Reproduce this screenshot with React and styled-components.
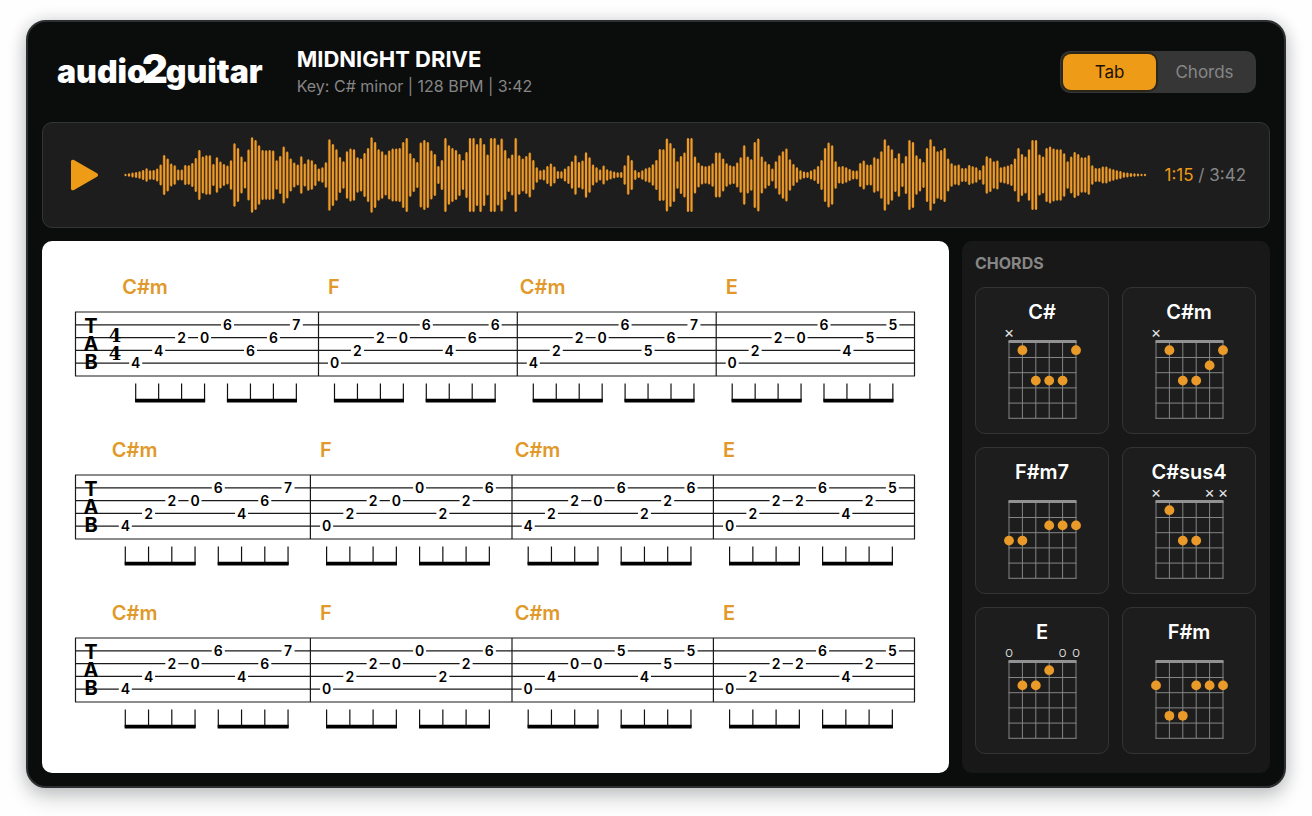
import React, { useState } from 'react';
import styled, { createGlobalStyle, ThemeProvider } from 'styled-components';

const theme = {
  accent: '#ee9b17',
  frame: '#0b0c0c',
  panel: '#1d1d1d',
  sidebar: '#181818',
  line: '#333434',
  muted: '#868686',
  white: '#ffffff',
};

const GlobalStyle = createGlobalStyle`
  *, *::before, *::after {
    box-sizing: border-box;
  }

  body {
    margin: 0;
    background: #fefefe;
    font-family: Inter, 'Liberation Sans', sans-serif;
  }

  h1, h2, h3, p {
    margin: 0;
  }
`;

const Page = styled.div`
  padding: 20px 26px 28px;
`;

const StyledApp = styled.div`
  padding: 0 14px 13px;
  color: ${({ theme }) => theme.white};
  background: ${({ theme }) => theme.frame};
  border: 2px solid #2d3032;
  border-radius: 20px;
  box-shadow: 0 10px 20px rgba(20, 24, 30, 0.2), 0 0 16px rgba(20, 24, 30, 0.16);
`;

const StyledHeader = styled.header`
  display: flex;
  align-items: center;
  height: 100px;
  padding: 0 14px 0 15px;
`;

const Logo = styled.a`
  display: flex;
  align-items: baseline;
  margin-right: 34px;
  padding-bottom: 4px;
  color: inherit;
  font-size: 32px;
  font-weight: 900;
  line-height: 40px;
  text-decoration: none;

  span {
    margin: 0 -2px 0 -5px;
    font-size: 40px;
  }
`;

const Song = styled.div`
  flex: 1;

  h1 {
    font-size: 22px;
    font-weight: 700;
    line-height: 28px;
  }

  p {
    color: ${({ theme }) => theme.muted};
    font-size: 16px;
    line-height: 26px;
  }
`;

const Toggle = styled.div`
  display: grid;
  grid-template-columns: 93px 97px;
  padding: 3px;
  background: #363636;
  border-radius: 10px;
`;

const ToggleButton = styled.button`
  height: 36px;
  padding: 0;
  color: ${({ $active }) => ($active ? '#1c1206' : '#868686')};
  background: ${({ $active, theme }) => ($active ? theme.accent : 'transparent')};
  border: 0;
  border-radius: 8px;
  box-shadow: ${({ $active }) => ($active ? '0 0 0 2px #2c2619' : 'none')};
  font: 400 17px Inter, sans-serif;
  cursor: pointer;
`;

const Player = styled.section`
  display: flex;
  align-items: center;
  height: 106px;
  padding: 0 23px 0 27px;
  background: ${({ theme }) => theme.panel};
  border: 1px solid ${({ theme }) => theme.line};
  border-radius: 10px;
`;

const PlayButton = styled.button`
  display: flex;
  margin-right: 25px;
  padding: 0;
  background: none;
  border: 0;
  cursor: pointer;
`;

const StyledWave = styled.svg`
  flex: 1;
  min-width: 0;
  height: 80px;
  margin-right: 18px;
`;

const Time = styled.p`
  color: ${({ theme }) => theme.muted};
  font-size: 17px;
  white-space: nowrap;

  span {
    color: ${({ theme }) => theme.accent};
  }
`;

const Main = styled.main`
  display: grid;
  grid-template-columns: minmax(0, 1fr) 308px;
  gap: 13px;
  margin-top: 13px;
`;

const Sheet = styled.section`
  display: flex;
  flex-direction: column;
  gap: 27px;
  padding: 30px 34px 40px 33px;
  background: ${({ theme }) => theme.white};
  border-radius: 10px;
`;

const StyledStaff = styled.svg`
  display: block;
  width: 100%;
  overflow: visible;

  text {
    font-family: Inter, 'Liberation Sans', sans-serif;
    font-weight: 600;
  }

  .chord {
    fill: #e0992a;
    font-size: 20px;
  }

  .fret {
    font-size: 14px;
    text-anchor: middle;
  }

  .clef {
    font-size: 20px;
    font-weight: 700;
    text-anchor: middle;
  }

  .meter {
    font-family: 'DejaVu Serif', serif;
    font-size: 18px;
    font-weight: 700;
    text-anchor: middle;
  }
`;

const Sidebar = styled.aside`
  padding: 9px 14px 19px 13px;
  background: ${({ theme }) => theme.sidebar};
  border-radius: 10px;

  h2 {
    margin-bottom: 11px;
    color: ${({ theme }) => theme.muted};
    font-size: 16px;
    font-weight: 700;
    line-height: 26px;
  }
`;

const ChordGrid = styled.div`
  display: grid;
  grid-template-columns: 1fr 1fr;
  gap: 13px;
`;

const Card = styled.article`
  display: flex;
  flex-direction: column;
  align-items: center;
  gap: 3px;
  padding: 12px 0;
  background: ${({ theme }) => theme.panel};
  border: 1px solid ${({ theme }) => theme.line};
  border-radius: 10px;

  h3 {
    font-size: 20px;
    font-weight: 600;
    line-height: 24px;
  }

  svg {
    overflow: visible;
  }

  text {
    fill: #e4e4e4;
    font-family: Inter, sans-serif;
    text-anchor: middle;
  }
`;

// half heights of the waveform bars, in thirds of a pixel
const levels = [
  2, 4, 6, 8, 10, 14, 19, 13, 14, 18, 30, 59, 48, 33, 28, 15, 15, 29, 28, 35, 50, 74, 54, 58, 58,
  32, 52, 39, 32, 27, 43, 94, 80, 54, 39, 75, 112, 104, 88, 74, 73, 74, 72, 43, 56, 84, 69, 48, 36,
  30, 55, 33, 46, 43, 32, 18, 22, 37, 106, 92, 76, 53, 40, 70, 78, 76, 52, 48, 65, 80, 112, 98, 76,
  70, 60, 72, 78, 78, 80, 98, 110, 64, 50, 38, 96, 104, 98, 72, 62, 26, 44, 110, 88, 80, 74, 62, 44,
  68, 110, 110, 92, 110, 92, 60, 110, 110, 90, 108, 74, 50, 60, 110, 58, 48, 56, 66, 44, 22, 13, 15,
  26, 33, 24, 11, 10, 18, 26, 40, 58, 38, 42, 67, 52, 30, 22, 15, 27, 16, 12, 9, 7, 8, 28, 58, 44,
  14, 8, 13, 19, 22, 31, 44, 77, 76, 108, 95, 80, 40, 56, 66, 110, 110, 54, 36, 27, 25, 27, 34, 66,
  66, 48, 34, 28, 26, 36, 52, 88, 54, 46, 98, 108, 54, 40, 32, 18, 40, 58, 70, 78, 46, 32, 22, 13,
  9, 8, 12, 17, 26, 44, 80, 96, 88, 40, 24, 26, 22, 17, 12, 12, 35, 42, 30, 30, 52, 48, 70, 106, 88,
  76, 50, 64, 35, 56, 104, 98, 58, 48, 38, 80, 106, 86, 70, 74, 80, 48, 34, 28, 30, 20, 20, 29, 25,
  22, 14, 28, 55, 50, 40, 42, 22, 24, 27, 32, 48, 80, 62, 54, 76, 104, 104, 60, 54, 80, 84, 78, 76,
  76, 64, 40, 54, 68, 62, 52, 52, 58, 28, 20, 20, 24, 24, 19, 16, 13, 11, 7, 6, 5, 4, 3, 2, 1,
];

const firstLayout = { bars: [0.5, 243.5, 442.3, 641.2, 839.5], inset: [60.2, 16], step: 22.95 };
const nextLayout = { bars: [0.5, 235.4, 437, 638.4, 839.5], inset: [49.8, 16.2], step: 23.25 };

const systems = [
  {
    layout: firstLayout,
    meter: true,
    measures: [
      ['C#m', '44206667'],
      ['F', '02206466'],
      ['C#m', '42206567'],
      ['E', '02206455'],
    ],
  },
  {
    layout: nextLayout,
    measures: [
      ['C#m', '42206467'],
      ['F', '02200226'],
      ['C#m', '42206226'],
      ['E', '02226425'],
    ],
  },
  {
    layout: nextLayout,
    measures: [
      ['C#m', '44206467'],
      ['F', '02200226'],
      ['C#m', '04005455'],
      ['E', '02226425'],
    ],
  },
];

// the picking pattern: which staff line each eighth note sits on
const pattern = [4, 3, 2, 2, 1, 3, 2, 1];

const STAFF_TOP = 41;
const LINE_GAP = 12.8;

// dots are [string, fret], strings counted from the left
const chords = [
  { name: 'C#', marks: '×     ', dots: [[1, 1], [5, 1], [2, 3], [3, 3], [4, 3]] },
  { name: 'C#m', marks: '×     ', dots: [[1, 1], [5, 1], [4, 2], [2, 3], [3, 3]] },
  { name: 'F#m7', marks: '      ', dots: [[3, 2], [4, 2], [5, 2], [0, 3], [1, 3]] },
  { name: 'C#sus4', marks: '×   ××', dots: [[1, 1], [2, 3], [3, 3]] },
  { name: 'E', marks: 'O   OO', dots: [[3, 1], [1, 2], [2, 2]] },
  { name: 'F#m', marks: '      ', dots: [[0, 2], [3, 2], [4, 2], [5, 2], [1, 4], [2, 4]] },
];

const Waveform = () => {
  const d = levels
    .map((level, i) => {
      const x = (1.5 + i * (1020 / (levels.length - 1))).toFixed(2);
      const h = Math.max(level / 3 - 0.6, 0.2).toFixed(2);
      return `M${x} ${40 - h}V${40 + Number(h)}`;
    })
    .join('');

  return (
    <StyledWave viewBox="0 0 1023 80" preserveAspectRatio="none" aria-hidden="true">
      <path d={d} stroke="#8a5210" strokeWidth="3.2" opacity="0.6" />
      <path d={d} stroke="#eb9c2c" strokeWidth="2" strokeLinecap="round" />
    </StyledWave>
  );
};

const Measure = ({ name, frets, start, step }) => (
  <g>
    <text className="chord" x={start - (name.length > 1 ? 13.5 : 6.5)} y="22.5">
      {name}
    </text>
    {frets.split('').map((fret, i) => {
      const x = start + i * step;
      const y = STAFF_TOP + pattern[i] * LINE_GAP;
      return (
        <g key={i}>
          <rect x={x - 6.5} y={y - 5} width="13" height="10" fill="#fff" />
          <text className="fret" x={x} y={y + 5.2}>
            {fret}
          </text>
          <path d={`M${x} ${STAFF_TOP + 71.5}v18`} stroke="#111" strokeWidth="1.2" />
        </g>
      );
    })}
    {[0, 4].map(i => (
      <path
        key={i}
        d={`M${start + i * step - 0.6} ${STAFF_TOP + 88.6}h${3 * step + 1.2}`}
        stroke="#000"
        strokeWidth="3.6"
      />
    ))}
  </g>
);

const Staff = ({ layout, meter, measures }) => (
  <StyledStaff viewBox="0 0 840 136">
    <g stroke="#1a1a1a" strokeWidth="1.2">
      {[0, 1, 2, 3, 4, 5].map(n => (
        <path key={n} d={`M0 ${STAFF_TOP + n * LINE_GAP}H840`} />
      ))}
      {layout.bars.map(x => (
        <path key={x} d={`M${x} ${STAFF_TOP}v${LINE_GAP * 5}`} />
      ))}
    </g>
    {['T', 'A', 'B'].map((letter, n) => (
      <text key={letter} className="clef" x="16" y={STAFF_TOP + 20.5 + n * 18.4}>
        {letter}
      </text>
    ))}
    {meter && (
      <>
        <text className="meter" x="40" y={STAFF_TOP + 30}>4</text>
        <text className="meter" x="40" y={STAFF_TOP + 47.5}>4</text>
      </>
    )}
    {measures.map(([name, frets], i) => (
      <Measure
        key={i}
        name={name}
        frets={frets}
        start={layout.bars[i] + layout.inset[i === 0 ? 0 : 1]}
        step={layout.step}
      />
    ))}
  </StyledStaff>
);

const ChordCard = ({ name, marks, dots }) => (
  <Card>
    <h3>{name}</h3>
    <svg width="80" height="94" viewBox="0 0 80 94">
      <g stroke="#858585" strokeWidth="1">
        {[0, 1, 2, 3, 4, 5].map(n => (
          <path key={n} d={`M${7 + n * 13.4} 14V91.5`} />
        ))}
        {[1, 2, 3, 4, 5].map(n => (
          <path key={n} d={`M6.5 ${15.3 + n * 15.2}h68`} />
        ))}
      </g>
      <path d="M6.5 14.5h68" stroke="#929292" strokeWidth="3" />
      {marks.split('').map((mark, n) => (
        mark !== ' ' && (
          <text key={n} x={7 + n * 13.4} y={mark === 'O' ? 10 : 11} fontSize={mark === 'O' ? 10 : 16}>
            {mark}
          </text>
        )
      ))}
      {dots.map(([string, fret]) => (
        <circle
          key={`${string}-${fret}`}
          cx={7 + string * 13.4}
          cy={8 + fret * 15.2}
          r="4.9"
          fill="#e99a28"
        />
      ))}
    </svg>
  </Card>
);

const App = () => {
  const [view, setView] = useState('Tab');

  return (
    <ThemeProvider theme={theme}>
      <GlobalStyle />
      <Page>
        <StyledApp>
          <StyledHeader>
            <Logo href="#">
              audio<span>2</span>guitar
            </Logo>
            <Song>
              <h1>MIDNIGHT DRIVE</h1>
              <p>Key: C# minor | 128 BPM | 3:42</p>
            </Song>
            <Toggle>
              {['Tab', 'Chords'].map(label => (
                <ToggleButton
                  key={label}
                  type="button"
                  $active={view === label}
                  aria-pressed={view === label}
                  onClick={() => setView(label)}>
                  {label}
                </ToggleButton>
              ))}
            </Toggle>
          </StyledHeader>

          <Player>
            <PlayButton type="button" aria-label="Play">
              <svg width="29" height="32" viewBox="0 0 29 32">
                <path
                  d="M1 2.6C1 .8 2.6.2 4 1l23 13.3c1.4.8 1.4 2.6 0 3.4L4 31c-1.4.8-3 .2-3-1.6z"
                  fill={theme.accent}
                />
              </svg>
            </PlayButton>
            <Waveform />
            <Time>
              <span>1:15</span> / 3:42
            </Time>
          </Player>

          <Main>
            <Sheet>
              {systems.map((system, i) => (
                <Staff key={i} {...system} />
              ))}
            </Sheet>
            <Sidebar>
              <h2>CHORDS</h2>
              <ChordGrid>
                {chords.map(chord => (
                  <ChordCard key={chord.name} {...chord} />
                ))}
              </ChordGrid>
            </Sidebar>
          </Main>
        </StyledApp>
      </Page>
    </ThemeProvider>
  );
};

export default App;
